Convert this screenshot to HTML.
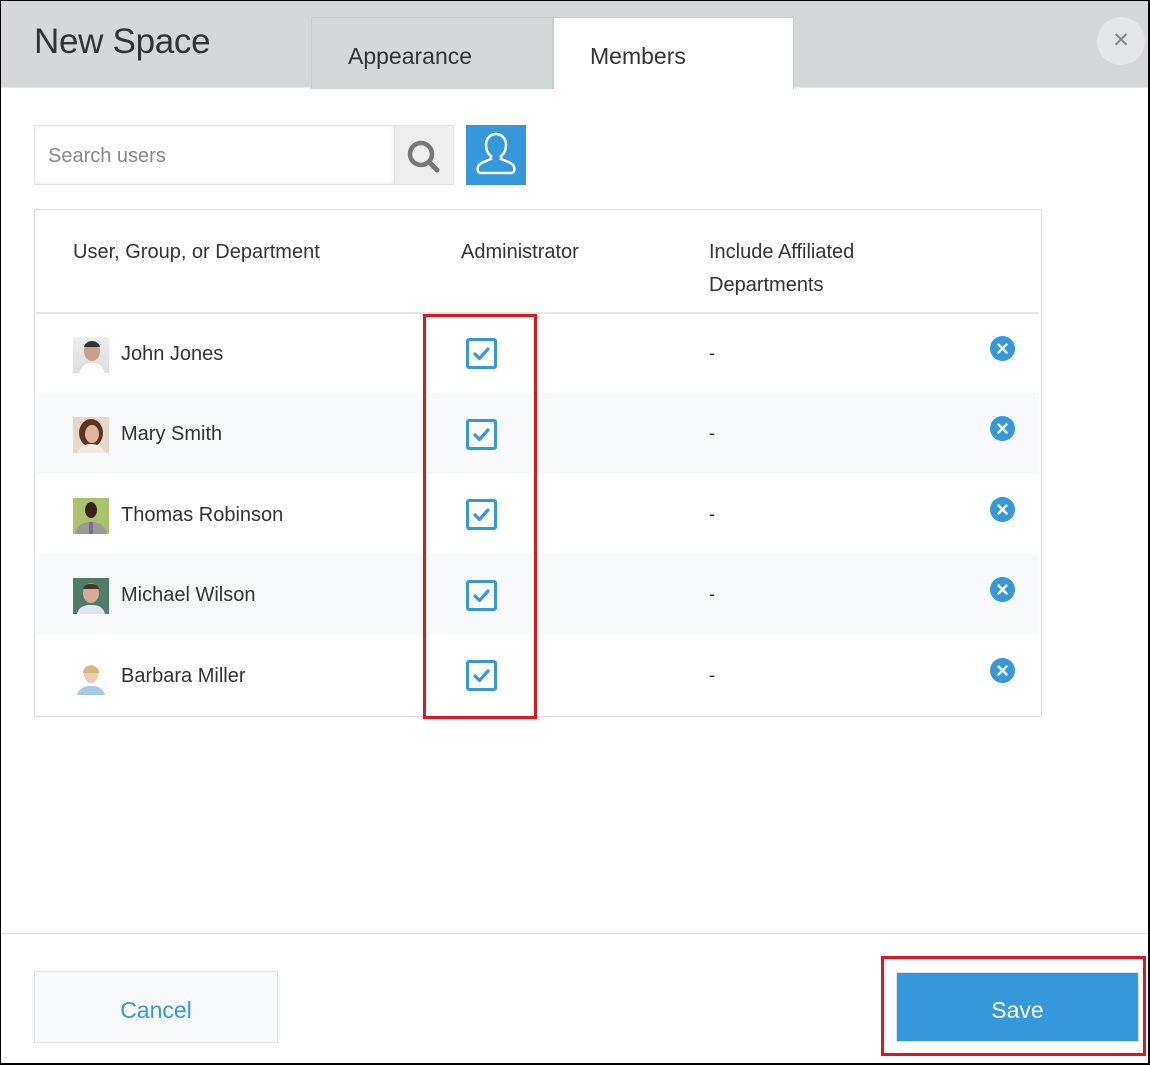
<!DOCTYPE html>
<html><head><meta charset="utf-8"><style>
*{box-sizing:border-box;margin:0;padding:0}
body{width:1150px;height:1065px;overflow:hidden;background:#fff;font-family:"Liberation Sans",Arial,sans-serif;position:relative}
.a{position:absolute}
.frame{left:0;top:0;width:1150px;height:1065px;border-top:1px solid #000;border-left:1px solid #000;border-right:2px solid #000;border-bottom:2px solid #000;z-index:10;pointer-events:none}
.hdr{left:0;top:0;width:1150px;height:88px;background:#d4d8d9;border-bottom:1px solid #e6e8e9}
.title{left:34px;top:22px;font-size:35px;color:#333;letter-spacing:-0.3px}
.tab{top:17px;height:72px;width:242px;font-size:23px;color:#333;padding:25px 0 0 36px}
.tab1{left:311px;background:#d4d8d9;border:1px solid #c8cccd;border-bottom:none}
.tab2{left:553px;width:241px;background:#fff;border:1px solid #c8cccd;border-bottom:none}
.close{left:1097px;top:17px;width:48px;height:48px;border-radius:50%;background:#e3e5e6;color:#888;font-size:21px;text-align:center;line-height:47px}
.search{left:34px;top:125px;width:361px;height:60px;border:1px solid #e3e3e3;box-shadow:inset 0 0 6px rgba(0,0,0,.08);font-size:20px;color:#888;padding:19px 0 0 13px}
.sbtn{left:394px;top:125px;width:60px;height:60px;background:#eeeeee;border:1px solid #e3e3e3}
.ubtn{left:466px;top:125px;width:60px;height:60px;background:#3498db}
.tbl{left:34px;top:209px;width:1008px;height:508px;border:1px solid #dcdcdc}
.th{font-size:20px;color:#333;top:236px;line-height:33px}
.hline{left:36px;top:312px;width:1003px;height:2px;background:#e6e6e6}
.row{left:36px;width:1003px;height:80px}
.alt{background:#f7f9fa}
.av{left:73px;width:36px;height:36px}
.nm{left:121px;font-size:20px;color:#333}
.cb{left:466px;width:31px;height:31px;border:3px solid #3498db;border-radius:3px;background:#fff}
.dash{left:709px;font-size:18px;color:#333}
.rm{left:990px;width:25px;height:25px;border-radius:50%;background:#3498db}
.red{border:3px solid #e0161c}
.fline{left:1px;top:933px;width:1147px;height:1px;background:#e3e3e3}
.cancel{left:34px;top:971px;width:244px;height:72px;background:#f7f9fa;border:1px solid #e1e3e5;color:#3498db;font-size:23px;text-align:center;line-height:76px}
.save{left:896px;top:972px;width:243px;height:70px;background:#3498db;border:1px solid #dfe3e6;color:#fff;font-size:23px;text-align:center;line-height:74px}
</style></head><body>
<div class="a hdr"></div>
<div class="a title">New Space</div>
<div class="a tab tab1">Appearance</div>
<div class="a tab tab2">Members</div>
<div class="a close">✕</div>

<div class="a search">Search users</div>
<div class="a sbtn"><svg width="60" height="60" viewBox="0 0 60 60"><circle cx="26" cy="28" r="11" fill="none" stroke="#777" stroke-width="4.5"/><line x1="34" y1="36" x2="42" y2="44" stroke="#777" stroke-width="5" stroke-linecap="round"/></svg></div>
<div class="a ubtn"><svg width="60" height="60" viewBox="0 0 60 60"><path d="M30 9c-6 0-10 5-10 11 0 5 2 9 5 11v3c-5 2-12 4-13 8-1 3 0 6 3 6h30c3 0 4-3 3-6-1-4-8-6-13-8v-3c3-2 5-6 5-11 0-6-4-11-10-11z" fill="none" stroke="#fff" stroke-width="2.5"/></svg></div>

<div class="a tbl"></div>
<div class="a th" style="left:73px">User, Group, or Department</div>
<div class="a th" style="left:461px">Administrator</div>
<div class="a th" style="left:709px">Include Affiliated<br>Departments</div>
<div class="a hline"></div>

<div class="a row" style="top:314px"></div>
<div class="a row alt" style="top:393px"></div>
<div class="a row" style="top:473px"></div>
<div class="a row alt" style="top:554px"></div>
<div class="a row" style="top:634px"></div>

<div class="a av" style="top:337px;background:linear-gradient(#eee,#ddd);"><svg width="36" height="36"><ellipse cx="19" cy="14" rx="8" ry="10" fill="#c9a08a"/><path d="M11 10c2-8 14-8 16 0" fill="#333"/><path d="M6 36c2-8 8-10 13-10s11 2 13 10z" fill="#fff"/></svg></div>
<div class="a av" style="top:417px;background:#e8d8c8"><svg width="36" height="36"><ellipse cx="18" cy="16" rx="12" ry="14" fill="#5a3322"/><ellipse cx="19" cy="17" rx="7" ry="9" fill="#e2b49a"/><path d="M4 36c3-7 9-9 14-9s11 2 14 9z" fill="#f3ece6"/></svg></div>
<div class="a av" style="top:498px;background:#a9c46a"><svg width="36" height="36"><ellipse cx="18" cy="12" rx="6" ry="8" fill="#3a2418"/><path d="M2 36c2-10 9-12 16-12s14 2 16 12z" fill="#9a9a98"/><rect x="16" y="24" width="4" height="12" fill="#7a6d8d"/></svg></div>
<div class="a av" style="top:578px;background:#4e7d6a"><svg width="36" height="36"><ellipse cx="18" cy="15" rx="8" ry="10" fill="#d8aa94"/><path d="M10 11c1-7 15-7 16 0" fill="#4a3428"/><path d="M4 36c2-8 8-9 14-9s12 1 14 9z" fill="#dfe8f2"/></svg></div>
<div class="a av" style="top:659px;background:#fff"><svg width="36" height="36"><ellipse cx="18" cy="15" rx="7" ry="9" fill="#eecbb4"/><path d="M10 14c0-10 16-10 16 0" fill="#d8b57a"/><path d="M4 36c2-7 8-9 14-9s12 2 14 9z" fill="#a9c8e8"/></svg></div>

<div class="a nm" style="top:343px">John Jones</div>
<div class="a nm" style="top:423px">Mary Smith</div>
<div class="a nm" style="top:504px">Thomas Robinson</div>
<div class="a nm" style="top:584px">Michael Wilson</div>
<div class="a nm" style="top:665px">Barbara Miller</div>

<div class="a cb" style="top:338px"><svg width="25" height="25"><path d="M6 13l4.5 4.5L19 8" fill="none" stroke="#3498db" stroke-width="3.2" stroke-linecap="round" stroke-linejoin="round"/></svg></div>
<div class="a cb" style="top:419px"><svg width="25" height="25"><path d="M6 13l4.5 4.5L19 8" fill="none" stroke="#3498db" stroke-width="3.2" stroke-linecap="round" stroke-linejoin="round"/></svg></div>
<div class="a cb" style="top:499px"><svg width="25" height="25"><path d="M6 13l4.5 4.5L19 8" fill="none" stroke="#3498db" stroke-width="3.2" stroke-linecap="round" stroke-linejoin="round"/></svg></div>
<div class="a cb" style="top:580px"><svg width="25" height="25"><path d="M6 13l4.5 4.5L19 8" fill="none" stroke="#3498db" stroke-width="3.2" stroke-linecap="round" stroke-linejoin="round"/></svg></div>
<div class="a cb" style="top:660px"><svg width="25" height="25"><path d="M6 13l4.5 4.5L19 8" fill="none" stroke="#3498db" stroke-width="3.2" stroke-linecap="round" stroke-linejoin="round"/></svg></div>

<div class="a dash" style="top:343px">-</div>
<div class="a dash" style="top:423px">-</div>
<div class="a dash" style="top:504px">-</div>
<div class="a dash" style="top:584px">-</div>
<div class="a dash" style="top:665px">-</div>

<div class="a rm" style="top:336px"><svg width="25" height="25"><path d="M8.5 8.5l8 8M16.5 8.5l-8 8" stroke="#fff" stroke-width="2.4" stroke-linecap="round"/></svg></div>
<div class="a rm" style="top:416px"><svg width="25" height="25"><path d="M8.5 8.5l8 8M16.5 8.5l-8 8" stroke="#fff" stroke-width="2.4" stroke-linecap="round"/></svg></div>
<div class="a rm" style="top:497px"><svg width="25" height="25"><path d="M8.5 8.5l8 8M16.5 8.5l-8 8" stroke="#fff" stroke-width="2.4" stroke-linecap="round"/></svg></div>
<div class="a rm" style="top:577px"><svg width="25" height="25"><path d="M8.5 8.5l8 8M16.5 8.5l-8 8" stroke="#fff" stroke-width="2.4" stroke-linecap="round"/></svg></div>
<div class="a rm" style="top:658px"><svg width="25" height="25"><path d="M8.5 8.5l8 8M16.5 8.5l-8 8" stroke="#fff" stroke-width="2.4" stroke-linecap="round"/></svg></div>

<div class="a red" style="left:423px;top:314px;width:114px;height:405px"></div>

<div class="a fline"></div>
<div class="a cancel">Cancel</div>
<div class="a save">Save</div>
<div class="a red" style="left:881px;top:956px;width:265px;height:100px"></div>

<div class="a frame"></div>
</body></html>
